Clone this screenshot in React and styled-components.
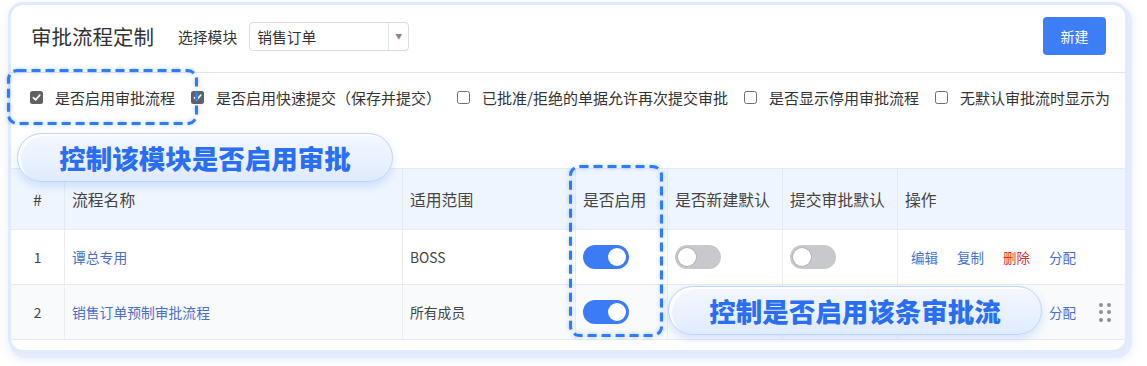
import React from "react";
import styled, { createGlobalStyle } from "styled-components";

const Global = createGlobalStyle`
  html, body { margin: 0; padding: 0; background: #ffffff; }
  body { font-family: "Noto Sans CJK SC", "Noto Sans", sans-serif; color: #333; }
  * { box-sizing: border-box; }
`;

const Page = styled.div`
  width: 1147px;
  height: 366px;
  padding: 5px 0 0 11px;
`;

const Card = styled.div`
  position: relative;
  width: 1114px;
  height: 345px;
  background: #fff;
  border-radius: 12px;
  box-shadow: 0 0 0 3px #dfeafc, 3px 4px 0 4px #e2ecfc, 2px 5px 10px 5px rgba(120, 160, 230, 0.18);
`;

const Header = styled.div`
  display: flex;
  align-items: center;
  height: 68px;
  padding: 0 19px 5px 20px;
  border-bottom: 1px solid #dfe6ef;
`;

const Title = styled.div`
  font-size: 20.5px;
  color: #333;
  margin-right: 24px;
`;

const Label = styled.div`
  font-size: 14.8px;
  color: #333;
  margin-right: 12px;
`;

const Select = styled.div`
  display: flex;
  align-items: center;
  width: 160px;
  height: 29px;
  border: 1px solid #d9dce1;
  border-radius: 4px;
  font-size: 14.8px;
  color: #333;
`;

const SelectValue = styled.div`
  flex: 1;
  padding-left: 7px;
`;

const SelectArrow = styled.div`
  width: 20px;
  height: 100%;
  border-left: 1px solid #e1e4e8;
  display: flex;
  align-items: center;
  justify-content: center;
  color: #8a8a8a;
  font-size: 7px;
`;

const Spacer = styled.div`
  flex: 1;
`;

const PrimaryButton = styled.button`
  width: 63px;
  height: 38px;
  border: none;
  border-radius: 4px;
  background: #3d7ef6;
  color: #fff;
  font-family: inherit;
  font-size: 14px;
`;

const Options = styled.div`
  display: flex;
  align-items: center;
  height: 95px;
  padding: 0 0 46px 19px;
`;

const Option = styled.label`
  display: flex;
  align-items: center;
  gap: 12px;
  margin-right: 16px;
  font-size: 15px;
  color: #333;
  white-space: nowrap;
`;

const Box = styled.span`
  width: 13px;
  height: 13px;
  border-radius: 2.5px;
  display: inline-flex;
  align-items: center;
  justify-content: center;
  background: ${(p) => (p.$checked ? "#616161" : "#fff")};
  border: ${(p) => (p.$checked ? "none" : "1.4px solid #6f6f6f")};
`;

const Table = styled.div`
  display: grid;
  grid-template-columns: 54px 338px 173px 92px 115px 115px 227px;
  border-top: 1px solid #e3eaf3;
`;

const HeadCell = styled.div`
  height: 60px;
  display: flex;
  align-items: center;
  justify-content: ${(p) => (p.$center ? "center" : "flex-start")};
  padding-left: ${(p) => (p.$center ? "0" : "7px")};
  background: #eef5fe;
  border-right: ${(p) => (p.$last ? "none" : "1px solid #e3e9f1")};
  font-size: 15.8px;
  color: #444;
  white-space: nowrap;
`;

const Cell = styled.div`
  height: ${(p) => p.$h}px;
  display: flex;
  align-items: center;
  justify-content: ${(p) => (p.$center ? "center" : "flex-start")};
  padding-left: ${(p) => (p.$center ? "0" : p.$pad || "7px")};
  background: ${(p) => (p.$alt ? "#f8fafc" : "#fff")};
  border-top: 1px solid #e7eaef;
  border-bottom: ${(p) => (p.$bottom ? "1px solid #e7eaef" : "none")};
  border-right: ${(p) => (p.$last ? "none" : "1px solid #e9ecf0")};
  font-size: 13.8px;
  color: #444;
  white-space: nowrap;
`;

const NameLink = styled.span`
  color: #4a6fc6;
`;

const Toggle = styled.span`
  position: relative;
  width: 46px;
  height: 24px;
  border-radius: 12px;
  background: ${(p) => (p.$on ? "#3b7bf5" : "#c8c9cc")};
  display: inline-block;
  &::after {
    content: "";
    position: absolute;
    top: 3px;
    left: ${(p) => (p.$on ? "25px" : "3px")};
    width: 18px;
    height: 18px;
    border-radius: 50%;
    background: #fff;
    box-shadow: ${(p) => (p.$on ? "none" : "0 0 0 1px #b5b6ba")};
  }
`;

const Actions = styled.div`
  display: flex;
  align-items: center;
  gap: 19px;
`;

const Action = styled.span`
  font-size: 13.5px;
  color: ${(p) => (p.$danger ? "#e0302b" : "#4470d2")};
  visibility: ${(p) => (p.$covered ? "hidden" : "visible")};
`;

const Drag = styled.span`
  display: grid;
  grid-template-columns: 4px 4px;
  gap: 3.5px 3.5px;
  margin-left: 4px;
  & > i {
    width: 4px;
    height: 4px;
    border-radius: 50%;
    background: #8c9099;
  }
`;

const DashedFrame = styled.svg`
  position: absolute;
  left: ${(p) => p.$x}px;
  top: ${(p) => p.$y}px;
  overflow: visible;
  filter: drop-shadow(0 0 2px rgba(47, 124, 246, 0.45));
  pointer-events: none;
`;

const Callout = styled.div`
  position: absolute;
  left: ${(p) => p.$x}px;
  top: ${(p) => p.$y}px;
  width: ${(p) => p.$w}px;
  height: 49px;
  border-radius: 25px;
  display: flex;
  align-items: center;
  justify-content: center;
  background: linear-gradient(180deg, #f3f7ff 0%, #eaf2ff 55%, #dfeafe 100%);
  border: 1.5px solid #bcd3fb;
  box-shadow: inset 3px 2px 0 rgba(255, 255, 255, 0.9), 0 4px 10px rgba(70, 130, 240, 0.2);
  font-size: 26.5px;
  font-weight: 900;
  color: #2a6ff3;
  white-space: nowrap;
`;

const Check = () => (
  <svg width="9" height="9" viewBox="0 0 10 10">
    <path d="M1.5 5.2 L4 7.6 L8.6 2.4" stroke="#fff" strokeWidth="1.8" fill="none" strokeLinecap="round" strokeLinejoin="round" />
  </svg>
);

const Dashed = ({ x, y, w, h }) => (
  <DashedFrame $x={x} $y={y} width={w} height={h}>
    <rect
      x="1.5"
      y="1.5"
      width={w - 3}
      height={h - 3}
      rx="9"
      fill="none"
      stroke="#2f7cf6"
      strokeWidth="3"
      strokeDasharray="9 5"
    />
  </DashedFrame>
);

const options = [
  { label: "是否启用审批流程", checked: true },
  { label: "是否启用快速提交（保存并提交）", checked: true },
  { label: "已批准/拒绝的单据允许再次提交审批", checked: false },
  { label: "是否显示停用审批流程", checked: false },
  { label: "无默认审批流时显示为", checked: false },
];

const heads = ["#", "流程名称", "适用范围", "是否启用", "是否新建默认", "提交审批默认", "操作"];

const rows = [
  { no: 1, name: "谭总专用", scope: "BOSS", on: true, h: 55 },
  { no: 2, name: "销售订单预制审批流程", scope: "所有成员", on: true, h: 56, alt: true, drag: true, covered: true },
];

export default function App() {
  return (
    <Page>
      <Global />
      <Card>
        <Header>
          <Title>审批流程定制</Title>
          <Label>选择模块</Label>
          <Select>
            <SelectValue>销售订单</SelectValue>
            <SelectArrow>▼</SelectArrow>
          </Select>
          <Spacer />
          <PrimaryButton>新建</PrimaryButton>
        </Header>
        <Options>
          {options.map((o) => (
            <Option key={o.label}>
              <Box $checked={o.checked}>{o.checked && <Check />}</Box>
              {o.label}
            </Option>
          ))}
        </Options>
        <Table>
          {heads.map((h, i) => (
            <HeadCell key={h} $center={i === 0} $last={i === heads.length - 1}>
              {h}
            </HeadCell>
          ))}
          {rows.map((r, ri) => {
            const bottom = ri === rows.length - 1;
            const common = { $h: r.h, $alt: r.alt, $bottom: bottom };
            return (
              <React.Fragment key={r.no}>
                <Cell {...common} $center>{r.no}</Cell>
                <Cell {...common}><NameLink>{r.name}</NameLink></Cell>
                <Cell {...common}>{r.scope}</Cell>
                <Cell {...common}><Toggle $on={r.on} /></Cell>
                <Cell {...common}><Toggle /></Cell>
                <Cell {...common}><Toggle /></Cell>
                <Cell {...common} $last $pad="13px">
                  <Actions>
                    <Action $covered={r.covered}>编辑</Action>
                    <Action $covered={r.covered}>复制</Action>
                    <Action $covered={r.covered} $danger>删除</Action>
                    <Action>分配</Action>
                    {r.drag && (
                      <Drag>
                        <i /><i /><i /><i /><i /><i />
                      </Drag>
                    )}
                  </Actions>
                </Cell>
              </React.Fragment>
            );
          })}
        </Table>
        <Dashed x={-4} y={64} w={191} h={56} />
        <Dashed x={558} y={160} w={94} h={172} />
        <Callout $x={6} $y={128} $w={376}>控制该模块是否启用审批</Callout>
        <Callout $x={657} $y={281} $w={374}>控制是否启用该条审批流</Callout>
      </Card>
    </Page>
  );
}
